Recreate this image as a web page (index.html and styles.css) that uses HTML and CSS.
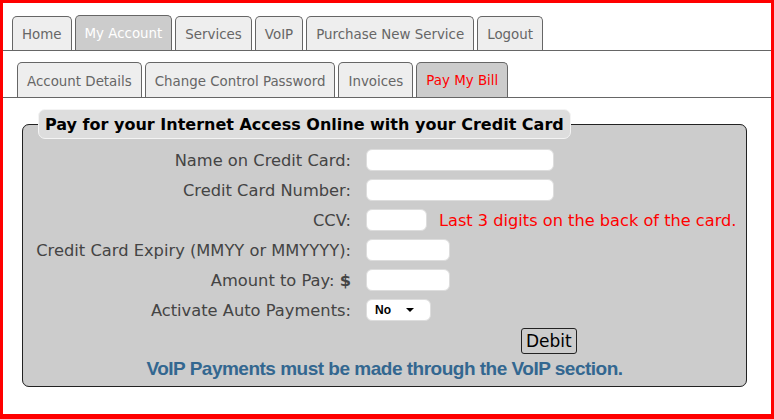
FILE: index.html
```html
<!DOCTYPE html>
<html lang="en">
<head>
    <meta charset="UTF-8">
    <title>Pay My Bill</title>
    <link rel="stylesheet" href="styles.css">
</head>
<body>
    <div class="frame">
        <ul class="tabs main-tabs">
            <li class="tab">Home</li>
            <li class="tab active">My Account</li>
            <li class="tab">Services</li>
            <li class="tab">VoIP</li>
            <li class="tab">Purchase New Service</li>
            <li class="tab">Logout</li>
        </ul>
        <ul class="tabs sub-tabs">
            <li class="tab">Account Details</li>
            <li class="tab">Change Control Password</li>
            <li class="tab">Invoices</li>
            <li class="tab active red">Pay My Bill</li>
        </ul>

        <fieldset class="paybox">
            <legend>Pay for your Internet Access Online with your Credit Card</legend>
            <div class="form">
                <label>Name on Credit Card:</label>
                <div class="field"><input class="txt wide" type="text"></div>

                <label>Credit Card Number:</label>
                <div class="field"><input class="txt wide" type="text"></div>

                <label>CCV:</label>
                <div class="field"><input class="txt tiny" type="text"><span class="hint">Last 3 digits on the back of the card.</span></div>

                <label>Credit Card Expiry (MMYY or MMYYYY):</label>
                <div class="field"><input class="txt short" type="text"></div>

                <label>Amount to Pay: <b>$</b></label>
                <div class="field"><input class="txt short" type="text"></div>

                <label>Activate Auto Payments:</label>
                <div class="field">
                    <div class="select">No <span class="arrow"></span></div>
                </div>
            </div>
            <div class="actions">
                <button class="debit">Debit</button>
            </div>
            <div class="voip-note">VoIP Payments must be made through the VoIP section.</div>
        </fieldset>
    </div>
</body>
</html>
```

FILE: styles.css
```css
* {
    margin: 0;
    padding: 0;
    box-sizing: border-box;
}

body {
    font-family: "DejaVu Sans", Verdana, sans-serif;
    background: white;
}

.frame {
    width: 774px;
    height: 419px;
    border: 3px solid red;
    border-bottom-width: 5px;
    padding-top: 13px;
}

.tabs {
    list-style: none;
    display: flex;
    align-items: flex-end;
    border-bottom: 1px solid #666;
}

.main-tabs {
    padding-left: 9px;
    gap: 3px;
    height: 35px;
}

.sub-tabs {
    margin-top: 11px;
    padding-left: 14px;
    gap: 3px;
    height: 36px;
}

.tab {
    background: #eee;
    color: #666;
    border: 1px solid #666;
    border-bottom: none;
    border-radius: 5px 5px 0 0;
    font-size: 13.4px;
    height: 34px;
    padding: 0 9px;
    display: flex;
    align-items: center;
    padding-top: 2px;
}

.tab.active {
    background: #ccc;
    color: white;
    height: 35px;
    padding-top: 0;
}

.tab.red {
    color: red;
}

.sub-tabs .tab {
    height: 35px;
}

.paybox {
    margin: 11px 24px 0 19px;
    background: #ccc;
    border: 1px solid #222;
    border-radius: 7px;
    padding: 10px 0 6px;
}

.paybox legend {
    margin-left: 15px;
    background: #ddd;
    border: 1px solid #f4f4f4;
    border-radius: 7px;
    padding: 5px 6px 4px;
    font-size: 16px;
    font-weight: bold;
    color: black;
}

.form {
    display: grid;
    grid-template-columns: 328px 1fr;
    column-gap: 15px;
    row-gap: 8px;
    align-items: center;
}

.form label {
    text-align: right;
    color: #444;
    font-size: 16.3px;
}

.field {
    display: flex;
    align-items: center;
}

.txt {
    height: 22px;
    background: white;
    border: 1px solid #ddd;
    border-radius: 6px;
}

.wide {
    width: 188px;
}

.tiny {
    width: 61px;
}

.short {
    width: 84px;
}

.hint {
    color: red;
    font-size: 16.2px;
    margin-left: 12px;
}

.select {
    width: 65px;
    height: 22px;
    background: white;
    border-radius: 6px;
    border: 1px solid #ddd;
    font-family: "Liberation Sans", Arial, sans-serif;
    font-weight: bold;
    font-size: 12px;
    display: flex;
    align-items: center;
    padding-left: 8px;
}

.arrow {
    margin-left: 15px;
    border-left: 4px solid transparent;
    border-right: 4px solid transparent;
    border-top: 4px solid black;
}

.actions {
    padding-left: 498px;
    margin-top: 7px;
}

.debit {
    font-family: "DejaVu Sans", Verdana, sans-serif;
    font-size: 17px;
    background: #ccc;
    border: 1px solid #222;
    border-radius: 3px;
    padding: 0 4px;
    height: 26px;
}

.voip-note {
    text-align: center;
    font-family: "Liberation Sans", Arial, sans-serif;
    font-weight: bold;
    font-size: 19px;
    color: #336790;
    letter-spacing: -0.5px;
    margin-top: 4px;
}
```
